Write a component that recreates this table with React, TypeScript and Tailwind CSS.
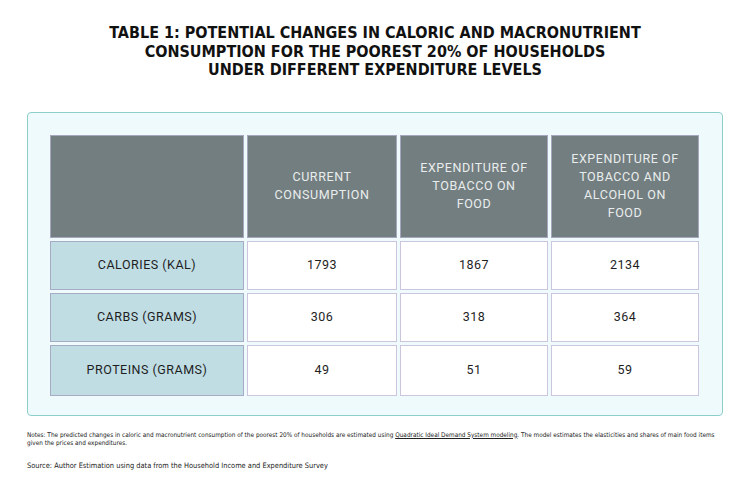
import React from "react";

const cond = { fontFamily: '"DejaVu Sans Condensed", Roboto, sans-serif' };

export default function App() {
  const rows = [
    ["CALORIES (KAL)", "1793", "1867", "2134"],
    ["CARBS (GRAMS)", "306", "318", "364"],
    ["PROTEINS (GRAMS)", "49", "51", "59"],
  ];
  return (
    <div className="w-[750px] h-[491px] bg-white overflow-hidden" style={{ fontFamily: "Roboto, sans-serif" }}>
      <h1
        className="pt-[24px] text-center text-[16px] leading-[18.5px] font-bold text-[#111]"
        style={cond}
      >
        TABLE 1: POTENTIAL CHANGES IN CALORIC AND MACRONUTRIENT
        <br />
        CONSUMPTION FOR THE POOREST 20% OF HOUSEHOLDS
        <br />
        UNDER DIFFERENT EXPENDITURE LEVELS
      </h1>
      <div className="mt-[32px] ml-[27px] w-[696px] h-[304px] rounded-[4px] border border-[#8ccfca] bg-[#effafd] pl-[22px] pt-[22px]">
        <div className="grid grid-cols-[194px_150px_148px_148px] grid-rows-[103px_49px_49px_51px] gap-[3px] w-[651px]">
          <div className="bg-[#737e80] border border-[#a6a6bd]" />
          {["CURRENT\nCONSUMPTION", "EXPENDITURE OF\nTOBACCO ON\nFOOD", "EXPENDITURE OF\nTOBACCO AND\nALCOHOL ON\nFOOD"].map((h, i) => (
            <div
              key={i}
              className="bg-[#737e80] border border-[#a6a6bd] flex items-center justify-center text-center text-[12.5px] leading-[18px] tracking-[0.6px] text-[#e9eded] whitespace-pre-line"
            >
              {h}
            </div>
          ))}
          {rows.map((r, ri) => (
            <React.Fragment key={ri}>
              <div className="bg-[#c0dde4] border border-[#a7abc6] flex items-center justify-center text-[12.5px] tracking-[0.5px] text-[#1e1e1e]">
                {r[0]}
              </div>
              {r.slice(1).map((v, vi) => (
                <div
                  key={vi}
                  className="bg-white border border-[#cdc5de] flex items-center justify-center text-[12.5px] tracking-[0.5px] text-[#1e1e1e]"
                >
                  {v}
                </div>
              ))}
            </React.Fragment>
          ))}
        </div>
      </div>
      <div className="ml-[27px] mt-[15px] w-[720px] whitespace-nowrap text-[6.4px] leading-[8.5px] text-[#222]" style={cond}>
        Notes: The predicted changes in caloric and macronutrient consumption of the poorest 20% of households are estimated using{" "}
        <span className="underline">Quadratic Ideal Demand System modeling</span>. The model estimates the elasticities and shares of main food items
        <br />
        given the prices and expenditures.
      </div>
      <div className="ml-[27px] mt-[13px] text-[7.4px] leading-[10px] text-[#222]" style={cond}>
        Source: Author Estimation using data from the Household Income and Expenditure Survey
      </div>
    </div>
  );
}
